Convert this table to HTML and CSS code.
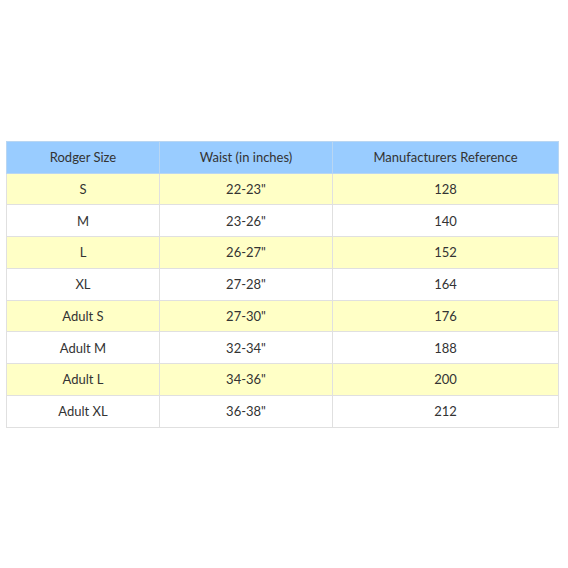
FILE: index.html
```html
<!DOCTYPE html>
<html>
<head>
<meta charset="utf-8">
<link rel="stylesheet" href="styles.css">
</head>
<body>
<div class="wrap">
<table class="sizes">
<colgroup><col class="c1"><col class="c2"><col class="c3"></colgroup>
<thead>
<tr><th>Rodger Size</th><th>Waist (in inches)</th><th>Manufacturers Reference</th></tr>
</thead>
<tbody>
<tr class="odd"><td>S</td><td>22-23"</td><td>128</td></tr>
<tr><td>M</td><td>23-26"</td><td>140</td></tr>
<tr class="odd"><td>L</td><td>26-27"</td><td>152</td></tr>
<tr><td>XL</td><td>27-28"</td><td>164</td></tr>
<tr class="odd"><td>Adult S</td><td>27-30"</td><td>176</td></tr>
<tr><td>Adult M</td><td>32-34"</td><td>188</td></tr>
<tr class="odd"><td>Adult L</td><td>34-36"</td><td>200</td></tr>
<tr><td>Adult XL</td><td>36-38"</td><td>212</td></tr>
</tbody>
</table>
</div>
</body>
</html>
```
FILE: styles.css
```css
html, body { margin: 0; padding: 0; background: #fff; }
.wrap {
  height: 568px;
  display: flex;
  align-items: center;
  padding-left: 6px;
  box-sizing: border-box;
}
.sizes {
  border-collapse: collapse;
  width: 552px;
  table-layout: fixed;
  font-family: Lato, "Noto Sans", sans-serif;
  font-size: 13px;
  color: #333;
}
.c1 { width: 153px; }
.c2 { width: 173px; }
.c3 { width: 226px; }
.sizes th, .sizes td {
  border: 1px solid #e0e0e0;
  text-align: center;
  padding: 0;
  font-weight: normal;
}
.sizes thead tr { height: 32px; }
.sizes th { background: #99ccff; border-color: #b9d6f2; }
.sizes tbody tr { height: 31.75px; }
.sizes tr.odd td { background: #ffffc6; }
```
